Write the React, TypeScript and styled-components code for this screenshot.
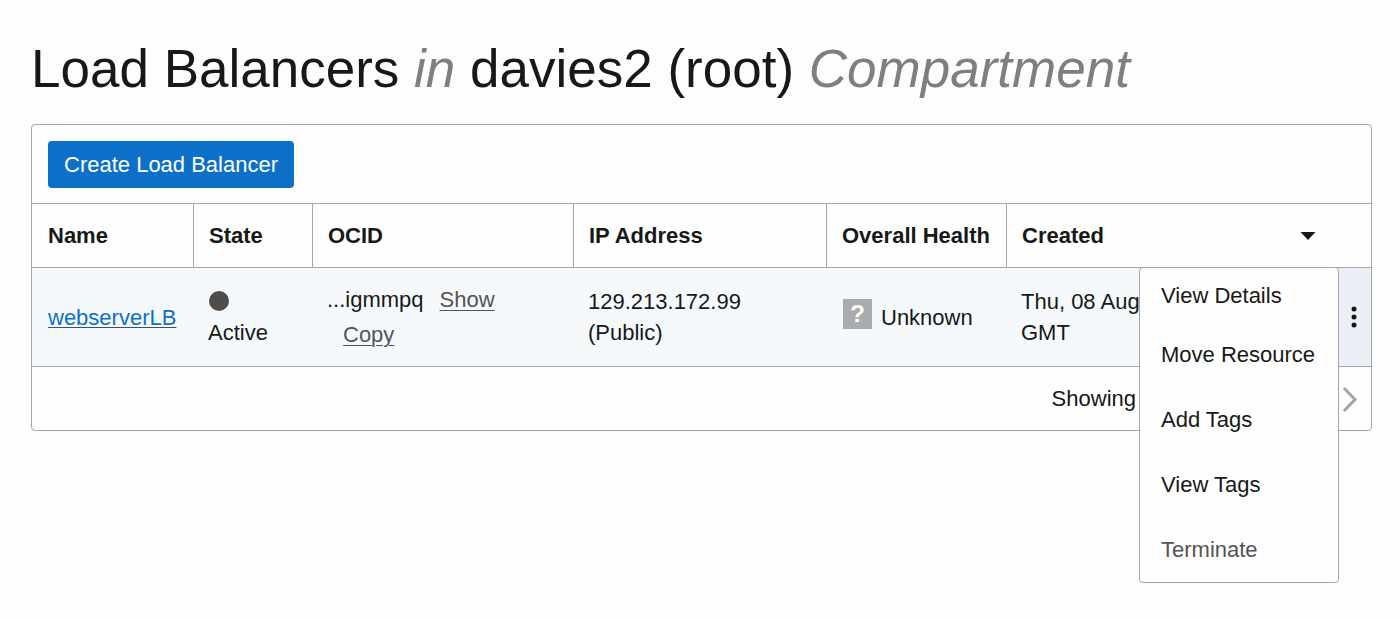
import React from "react";
import styled, { createGlobalStyle } from "styled-components";

const line = "#a3a7ac";
const ink = "#171918";

const GlobalStyle = createGlobalStyle`
  *, *::before, *::after { box-sizing: border-box; }
  body {
    margin: 0;
    background: #fdfdfd;
    color: ${ink};
    font-family: "Liberation Sans", Arial, sans-serif;
    font-size: 22px;
    line-height: 31px;
  }
  button { font: inherit; color: inherit; border: 0; background: none; cursor: pointer; }
`;

const Page = styled.main`
  min-height: 100vh;
  padding: 38px 28px 36px 31px;
`;

const Title = styled.h1`
  margin: 0 0 24px;
  font-size: 53px;
  font-weight: 400;
  line-height: 62px;
`;

const Muted = styled.em`
  color: #807e7e;
`;

const Panel = styled.section`
  border: 1px solid ${line};
  border-radius: 4px;
  background: #fefefe;
`;

const Toolbar = styled.div`
  display: flex;
  padding: 16px 16px 15px;
`;

const PrimaryButton = styled.button`
  && {
    height: 47px;
    padding: 0 16px;
    border-radius: 4px;
    background: #0d70c8;
    color: #fff;
  }
`;

const Table = styled.table`
  width: 100%;
  table-layout: fixed;
  border-collapse: separate;
  border-spacing: 0;
  border-top: 1px solid ${line};
  border-bottom: 1px solid ${line};
`;

const Col = styled.col<{ $width?: number }>`
  width: ${(p) => (p.$width ? `${p.$width}px` : "auto")};
`;

const HeadCell = styled.th<{ $divider?: boolean; $lead?: boolean }>`
  height: 64px;
  padding: 0 15px 0 ${(p) => (p.$lead ? 16 : 15)}px;
  border-bottom: 1px solid ${line};
  border-right: ${(p) => (p.$divider ? `1px solid ${line}` : "0")};
  text-align: left;
  white-space: nowrap;
`;

const SortButton = styled.button`
  && {
    display: flex;
    align-items: center;
    justify-content: space-between;
    width: 100%;
    padding: 0 8px 0 0;
    font-weight: 700;
  }
`;

const Cell = styled.td<{ $lead?: boolean }>`
  height: 98px;
  padding: 0 14px 0 ${(p) => (p.$lead ? 16 : 14)}px;
  background: #f5f9fc;
  vertical-align: middle;
`;

const ActionCell = styled.td`
  position: relative;
  padding: 0;
  background: #eaf0f5;
`;

const NameLink = styled.a`
  color: #0d70c8;
  text-decoration-color: #3a4f63;
  text-decoration-thickness: 1px;
  text-underline-offset: 2px;
`;

const SubtleLink = styled.a`
  display: inline-block;
  margin-left: 16px;
  color: #555352;
  line-height: 35px;
  text-underline-offset: 3px;
  text-decoration-thickness: 1px;
`;

const StateDot = styled.span`
  display: block;
  width: 20px;
  height: 20px;
  margin: 5px 0 6px 1px;
  border-radius: 50%;
  background: #504c4a;
`;

const Health = styled.div`
  display: flex;
  align-items: center;
  gap: 9px;
  padding-left: 2px;
`;

const HealthBadge = styled.span`
  width: 29px;
  height: 30px;
  margin-bottom: 6px;
  background: #a9abad;
  color: #fff;
  font-weight: 700;
  font-size: 24px;
  line-height: 30px;
  text-align: center;
`;

const KebabButton = styled.button`
  && {
    display: flex;
    align-items: center;
    justify-content: center;
    width: 100%;
    height: 98px;
    padding: 0 2px 0 0;
  }
`;

const Menu = styled.div`
  position: absolute;
  z-index: 1;
  top: -1px;
  right: 100%;
  width: 200px;
  border: 1px solid ${line};
  border-radius: 4px;
  background: #fefefe;
`;

const MenuItem = styled.button<{ $quiet?: boolean }>`
  && {
    display: block;
    width: 100%;
    height: 65px;
    padding: 0 21px;
    color: ${(p) => (p.$quiet ? "#555352" : ink)};
    text-align: left;
    white-space: nowrap;
  }
  &&:first-child { height: 54px; }
`;

const Footer = styled.footer`
  display: flex;
  align-items: center;
  justify-content: flex-end;
  gap: 203px;
  height: 63px;
  padding-right: 12px;
`;

const NextButton = styled.button`
  && {
    display: flex;
    padding: 0;
  }
`;

export default function App() {
  return (
    <>
      <GlobalStyle />
      <Page>
        <Title>
          Load Balancers <Muted>in</Muted> davies2 (root) <Muted>Compartment</Muted>
        </Title>
        <Panel>
          <Toolbar>
            <PrimaryButton type="button">Create Load Balancer</PrimaryButton>
          </Toolbar>
          <Table>
            <colgroup>
              <Col $width={162} />
              <Col $width={119} />
              <Col $width={261} />
              <Col $width={253} />
              <Col $width={180} />
              <Col />
              <Col $width={32} />
            </colgroup>
            <thead>
              <tr>
                <HeadCell $divider $lead>Name</HeadCell>
                <HeadCell $divider>State</HeadCell>
                <HeadCell $divider>OCID</HeadCell>
                <HeadCell $divider>IP Address</HeadCell>
                <HeadCell $divider>Overall Health</HeadCell>
                <HeadCell>
                  <SortButton type="button">
                    Created
                    <svg width="16" height="10" viewBox="0 0 16 10" aria-hidden="true">
                      <path d="M0.5 1H15.5L8 9Z" fill={ink} />
                    </svg>
                  </SortButton>
                </HeadCell>
                <HeadCell as="td" />
              </tr>
            </thead>
            <tbody>
              <tr>
                <Cell $lead>
                  <NameLink href="#webserverLB">webserverLB</NameLink>
                </Cell>
                <Cell>
                  <StateDot />
                  Active
                </Cell>
                <Cell>
                  ...igmmpq
                  <SubtleLink href="#show">Show</SubtleLink>
                  <br />
                  <SubtleLink href="#copy">Copy</SubtleLink>
                </Cell>
                <Cell>
                  129.213.172.99
                  <br />
                  (Public)
                </Cell>
                <Cell>
                  <Health>
                    <HealthBadge>?</HealthBadge>
                    Unknown
                  </Health>
                </Cell>
                <Cell>
                  Thu, 08 Aug
                  <br />
                  GMT
                </Cell>
                <ActionCell>
                  <KebabButton type="button" aria-label="Actions">
                    <svg width="6" height="22" viewBox="0 0 6 22" fill={ink} aria-hidden="true">
                      <circle cx="3" cy="3" r="2.5" />
                      <circle cx="3" cy="11" r="2.5" />
                      <circle cx="3" cy="19" r="2.5" />
                    </svg>
                  </KebabButton>
                  <Menu>
                    <MenuItem type="button">View Details</MenuItem>
                    <MenuItem type="button">Move Resource</MenuItem>
                    <MenuItem type="button">Add Tags</MenuItem>
                    <MenuItem type="button">View Tags</MenuItem>
                    <MenuItem type="button" $quiet>Terminate</MenuItem>
                  </Menu>
                </ActionCell>
              </tr>
            </tbody>
          </Table>
          <Footer>
            <span>Showing</span>
            <NextButton type="button" aria-label="Next page">
              <svg width="20" height="26" viewBox="0 0 20 26" fill="none" stroke="#a3a5a8" strokeWidth="3" aria-hidden="true">
                <path d="M5 2L16 13.5L5 25" />
              </svg>
            </NextButton>
          </Footer>
        </Panel>
      </Page>
    </>
  );
}
